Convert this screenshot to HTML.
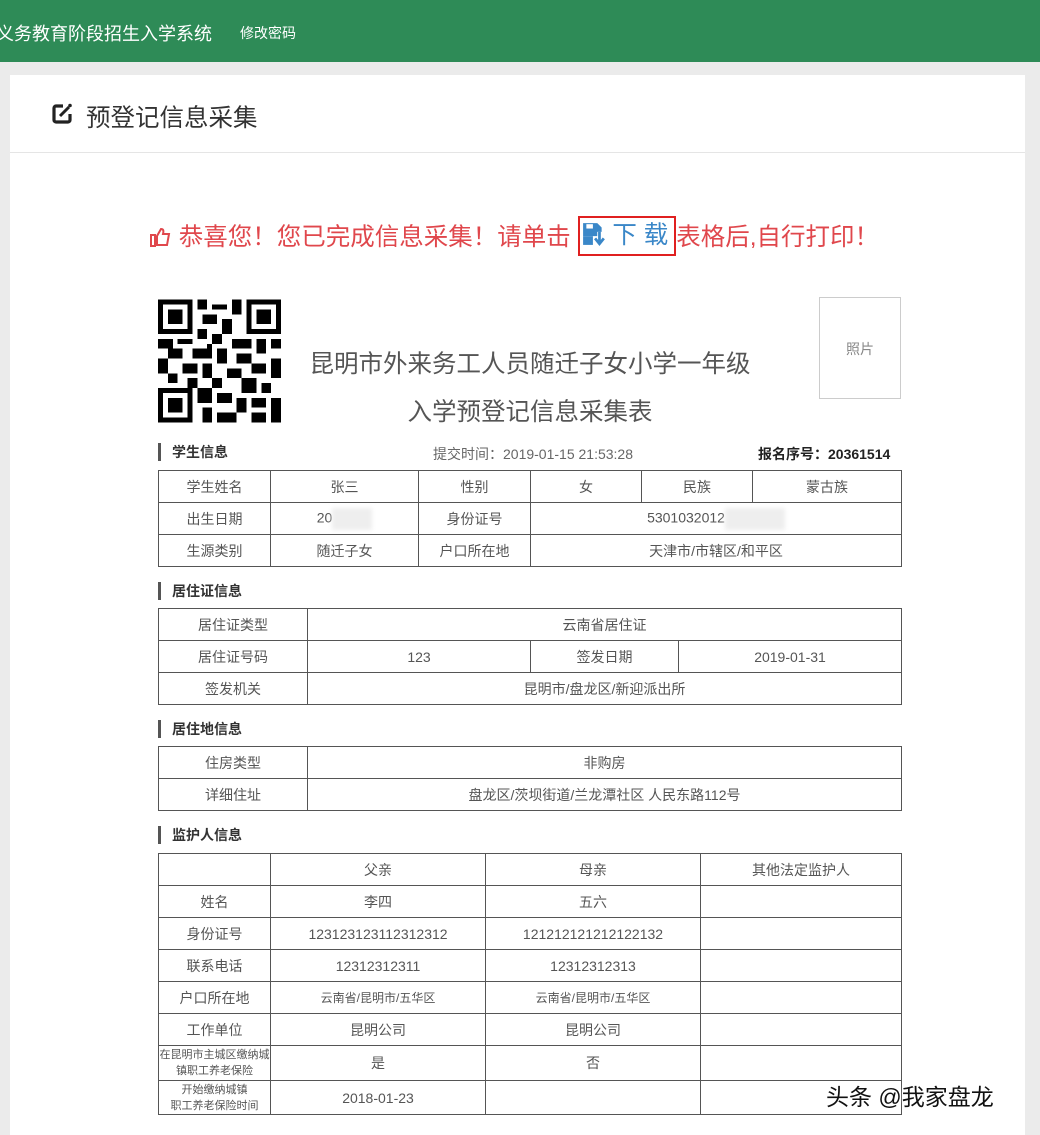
<!DOCTYPE html>
<html><head><meta charset="utf-8"><style>
*{margin:0;padding:0;box-sizing:border-box}
body{width:1040px;height:1130px;background:#ebebeb;font-family:"Liberation Sans","Noto Sans CJK SC",sans-serif;position:relative;overflow:hidden;color:#555}
.hdr{position:absolute;left:0;top:0;width:1040px;height:62px;background:#2e8b57;color:#fff}
.hdr .t{position:absolute;left:-4px;top:20px;font-size:18px}
.hdr .m{position:absolute;left:240px;top:23px;font-size:14px}
.panel{position:absolute;left:10px;top:75px;width:1015px;height:1060px;background:#fff}
.ptitle{position:absolute;left:0;top:0;width:1015px;height:78px;border-bottom:1px solid #e5e5e5}
.ptitle span{position:absolute;left:76px;top:24px;font-size:24.5px;color:#333}
.a{position:absolute}
.msg{left:150px;top:218px;font-size:24.5px;color:#e0474c;white-space:nowrap}
.dl{display:inline-block;border:2px solid #e02020;color:#3a87c8;padding:0 6px 0 2px;height:40px;line-height:36px;vertical-align:middle;margin-top:-6px}
table{position:absolute;border-collapse:collapse;table-layout:fixed;font-size:14px;color:#555}
td{border:1px solid #555;text-align:center;height:32px;padding:0;white-space:nowrap;overflow:hidden}
.sec{position:absolute;left:158px;font-size:14px;font-weight:bold;color:#333;border-left:3px solid #555;padding-left:11px;line-height:18px}
.small{font-size:12px}
.tiny{font-size:11px;line-height:16px;white-space:normal}
.blur{display:inline-block;width:40px;height:22px;background:#eee;vertical-align:middle;filter:blur(2px)}
</style></head><body>
<div class="hdr"><span class="t">义务教育阶段招生入学系统</span><span class="m">修改密码</span></div>
<div class="panel"><div class="ptitle">
<svg class="a" style="left:40px;top:27px" width="24" height="24" viewBox="0 0 24 24"><path d="M13 4H6a2 2 0 0 0-2 2v12a2 2 0 0 0 2 2h12a2 2 0 0 0 2-2v-6" fill="none" stroke="#222" stroke-width="3.2"/><path d="M10 14l9-9" stroke="#222" stroke-width="3"/><circle cx="20" cy="3.5" r="1.8" fill="#222"/></svg>
<span>预登记信息采集</span></div></div>

<div class="a msg"><svg width="22" height="20" viewBox="0 0 22 20" style="vertical-align:-2px"><rect x="1" y="8" width="4" height="11" fill="none" stroke="#e0474c" stroke-width="2"/><path d="M7 9l4-7c2 0 3 1 2 5h6l-2 11H7z" fill="none" stroke="#e0474c" stroke-width="2"/></svg> 恭喜您！您已完成信息采集！请单击 <span class="dl"><svg width="24" height="24" viewBox="0 0 22 22" style="vertical-align:-3px"><path d="M1 1h13l4 4v4h-4V13H1z" fill="#3a87c8"/><rect x="4" y="2" width="6" height="4" fill="#fff"/><path d="M16 9v10M12 15l4 5 4-5" stroke="#3a87c8" stroke-width="2.5" fill="none"/><path d="M1 13h9v8H1z" fill="#3a87c8"/></svg> 下 载</span>表格后,自行打印！</div>

<svg class="a" style="left:158px;top:297px" width="123" height="128" viewBox="0 0 25 25" shape-rendering="crispEdges">
<g fill="#000">
<path d="M0 0h7v7H0zM18 0h7v7h-7zM0 18h7v7H0z"/>
</g>
<g fill="#fff"><path d="M1 1h5v5H1zM19 1h5v5h-5zM1 19h5v5H1z"/></g>
<g fill="#000"><path d="M2 2h3v3H2zM20 2h3v3h-3zM2 20h3v3H2z"/>
<path d="M8 0h2v2H8zM11 1h3v1h-3zM15 0h2v3h-2zM9 3h3v2H9zM13 4h2v3h-2zM8 6h2v2H8zM11 7h2v2h-2zM0 8h3v2H0zM4 8h3v1H4zM15 8h4v2h-4zM20 8h2v3h-2zM23 8h2v2h-2zM2 10h3v2H2zM7 10h4v2H7zM12 10h2v3h-2zM16 11h3v2h-3zM0 12h2v3H0zM5 13h3v2H5zM9 13h2v3H9zM14 14h3v2h-3zM19 13h3v2h-3zM23 12h2v4h-2zM2 15h2v2H2zM6 16h2v2H6zM11 16h2v2h-2zM17 16h3v3h-3zM21 17h2v2h-2zM8 18h3v3H8zM12 19h3v2h-3zM16 20h2v3h-2zM19 20h3v2h-3zM23 20h2v5h-2zM9 22h2v3H9zM12 23h4v2h-4zM19 23h3v2h-3zM10 9h1v1h-1zM4 11h1v1H4z"/></g></svg>
<div class="a" style="left:819px;top:297px;width:82px;height:102px;border:1px solid #ccc;font-size:14px;color:#888;text-align:center;line-height:102px">照片</div>
<div class="a" style="left:280px;top:345px;width:500px;text-align:center;font-size:24.5px;color:#555">昆明市外来务工人员随迁子女小学一年级</div>
<div class="a" style="left:280px;top:393px;width:500px;text-align:center;font-size:24.5px;color:#555">入学预登记信息采集表</div>

<div class="sec" style="top:443px">学生信息</div>
<div class="a" style="left:433px;top:444px;font-size:14px;color:#666">提交时间：2019-01-15 21:53:28</div>
<div class="a" style="left:758px;top:444px;font-size:14px;font-weight:bold;color:#222">报名序号：20361514</div>
<table style="left:158px;top:470px;width:743px"><colgroup><col style="width:112px"><col style="width:148px"><col style="width:112px"><col style="width:111px"><col style="width:111px"><col style="width:149px"></colgroup>
<tr><td>学生姓名</td><td>张三</td><td>性别</td><td>女</td><td>民族</td><td>蒙古族</td></tr>
<tr><td>出生日期</td><td>20<span class="blur"></span></td><td>身份证号</td><td colspan="3">5301032012<span class="blur" style="width:60px"></span></td></tr>
<tr><td>生源类别</td><td>随迁子女</td><td>户口所在地</td><td colspan="3">天津市/市辖区/和平区</td></tr></table>

<div class="sec" style="top:582px">居住证信息</div>
<table style="left:158px;top:608px;width:743px"><colgroup><col style="width:149px"><col style="width:223px"><col style="width:148px"><col style="width:223px"></colgroup>
<tr><td>居住证类型</td><td colspan="3">云南省居住证</td></tr>
<tr><td>居住证号码</td><td>123</td><td>签发日期</td><td>2019-01-31</td></tr>
<tr><td>签发机关</td><td colspan="3">昆明市/盘龙区/新迎派出所</td></tr></table>

<div class="sec" style="top:720px">居住地信息</div>
<table style="left:158px;top:746px;width:743px"><colgroup><col style="width:149px"><col style="width:594px"></colgroup>
<tr><td>住房类型</td><td>非购房</td></tr>
<tr><td>详细住址</td><td>盘龙区/茨坝街道/兰龙潭社区 人民东路112号</td></tr></table>

<div class="sec" style="top:826px">监护人信息</div>
<table style="left:158px;top:853px;width:743px"><colgroup><col style="width:112px"><col style="width:215px"><col style="width:215px"><col style="width:201px"></colgroup>
<tr><td></td><td>父亲</td><td>母亲</td><td>其他法定监护人</td></tr>
<tr><td>姓名</td><td>李四</td><td>五六</td><td></td></tr>
<tr><td>身份证号</td><td>123123123112312312</td><td>121212121212122132</td><td></td></tr>
<tr><td>联系电话</td><td>12312312311</td><td>12312312313</td><td></td></tr>
<tr><td>户口所在地</td><td class="small">云南省/昆明市/五华区</td><td class="small">云南省/昆明市/五华区</td><td></td></tr>
<tr><td>工作单位</td><td>昆明公司</td><td>昆明公司</td><td></td></tr>
<tr><td class="tiny" style="height:35px">在昆明市主城区缴纳城镇职工养老保险</td><td>是</td><td>否</td><td></td></tr>
<tr><td class="tiny" style="height:34px">开始缴纳城镇<br>职工养老保险时间</td><td>2018-01-23</td><td></td><td></td></tr></table>
<div class="a" style="left:826px;top:1078px;font-size:23px;color:#111;text-shadow:0 0 3px #fff;white-space:nowrap">头条 @我家盘龙</div>
</body></html>
